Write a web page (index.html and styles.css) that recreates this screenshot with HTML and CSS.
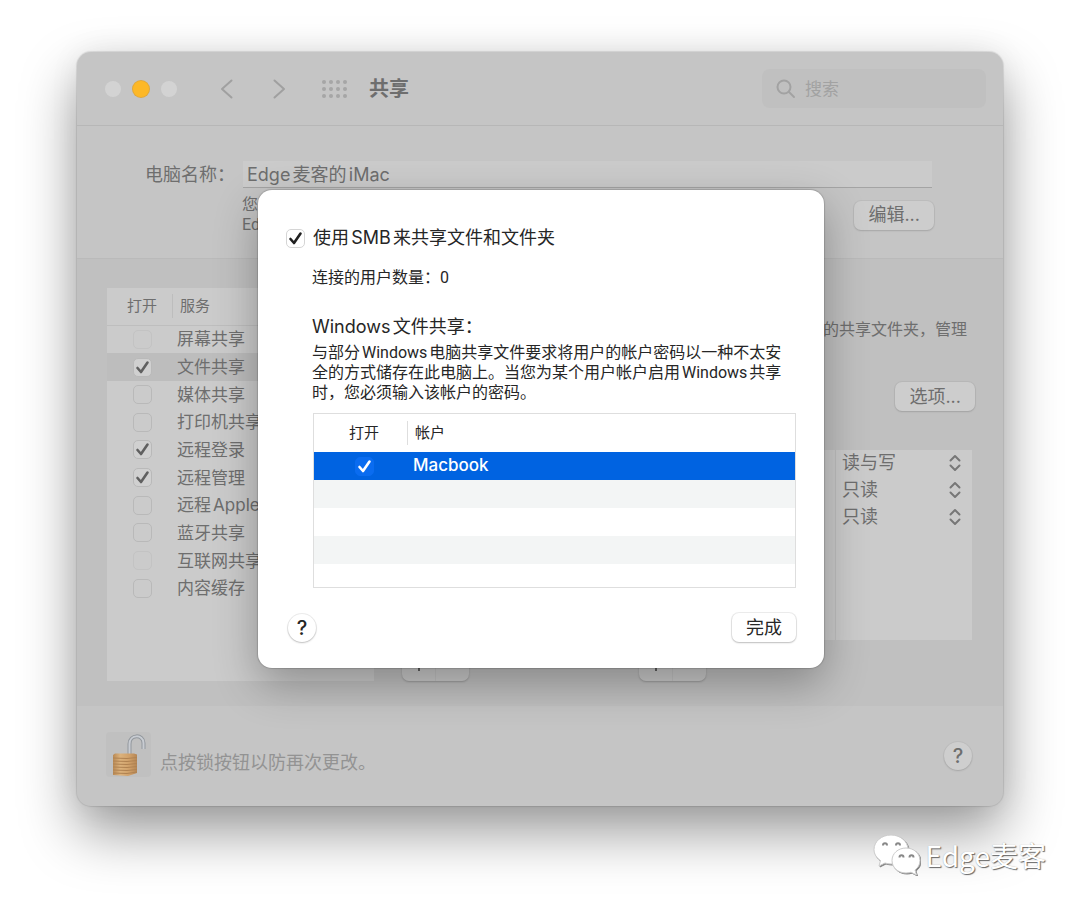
FILE: index.html
```html
<!DOCTYPE html>
<html lang="zh-CN">
<head>
    <meta charset="UTF-8">
    <meta name="viewport" content="width=device-width, initial-scale=1.0">
    <title>共享</title>
    <link rel="stylesheet" href="styles.css">
</head>
<body>
    <main class="window">
        <header class="toolbar">
            <div class="lights">
                <span class="light"></span>
                <span class="light minimize"></span>
                <span class="light"></span>
            </div>
            <button class="icon-button back" aria-label="返回">
                <svg width="13" height="20" viewBox="0 0 13 20"><path d="M11.500 1.500 2 10l9.500 8.500"/></svg>
            </button>
            <button class="icon-button forward" aria-label="前进">
                <svg width="13" height="20" viewBox="0 0 13 20"><path d="M1.500 1.500 11 10l-9.500 8.500"/></svg>
            </button>
            <button class="icon-button show-all" aria-label="显示全部">
                <svg width="26" height="20" viewBox="0 0 26 20">
                    <g class="dots">
                        <circle cx="2" cy="3" r="2"/><circle cx="9" cy="3" r="2"/><circle cx="16" cy="3" r="2"/><circle cx="23" cy="3" r="2"/>
                        <circle cx="2" cy="10" r="2"/><circle cx="9" cy="10" r="2"/><circle cx="16" cy="10" r="2"/><circle cx="23" cy="10" r="2"/>
                        <circle cx="2" cy="17" r="2"/><circle cx="9" cy="17" r="2"/><circle cx="16" cy="17" r="2"/><circle cx="23" cy="17" r="2"/>
                    </g>
                </svg>
            </button>
            <h1 class="title">共享</h1>
            <label class="search">
                <svg width="20" height="20" viewBox="0 0 20 20"><circle cx="8" cy="8" r="6.500"/><path d="m13 13 5 5"/></svg>
                <input type="search" placeholder="搜索" aria-label="搜索">
            </label>
        </header>

        <section class="computer">
            <div class="name-row">
                <label for="computer-name">电脑名称：</label>
                <input type="text" id="computer-name" value="Edge麦客的iMac">
            </div>
            <div class="address-row">
                <p class="small">您<br>Edge</p>
                <button class="button">编辑...</button>
            </div>
        </section>

        <section class="sharing">
            <div class="services">
                <table>
                    <thead>
                        <tr><th class="on">打开</th><th><span class="divider">服务</span></th></tr>
                    </thead>
                    <tbody>
                        <tr><td class="on"><input type="checkbox" id="s1" disabled></td><td><label for="s1">屏幕共享</label></td></tr>
                        <tr class="current"><td class="on"><input type="checkbox" id="s2" checked></td><td><label for="s2">文件共享</label></td></tr>
                        <tr><td class="on"><input type="checkbox" id="s3"></td><td><label for="s3">媒体共享</label></td></tr>
                        <tr><td class="on"><input type="checkbox" id="s4"></td><td><label for="s4">打印机共享</label></td></tr>
                        <tr><td class="on"><input type="checkbox" id="s5" checked></td><td><label for="s5">远程登录</label></td></tr>
                        <tr><td class="on"><input type="checkbox" id="s6" checked></td><td><label for="s6">远程管理</label></td></tr>
                        <tr><td class="on"><input type="checkbox" id="s7"></td><td><label for="s7">远程Apple</label></td></tr>
                        <tr><td class="on"><input type="checkbox" id="s8"></td><td><label for="s8">蓝牙共享</label></td></tr>
                        <tr><td class="on"><input type="checkbox" id="s9" disabled></td><td><label for="s9">互联网共享</label></td></tr>
                        <tr><td class="on"><input type="checkbox" id="s10"></td><td><label for="s10">内容缓存</label></td></tr>
                    </tbody>
                </table>
            </div>

            <div class="detail">
                <p class="small summary">上的共享文件夹，管理</p>
                <button class="button options">选项...</button>
                <div class="lists">
                    <div class="folders"></div>
                    <div class="users">
                        <div class="permissions">
                            <div class="permission">
                                <select aria-label="权限"><option>读与写</option></select>
                                <svg width="12" height="18" viewBox="0 0 12 18"><path d="M1.500 6.500 6 2l4.500 4.500M1.500 11.500 6 16l4.500-4.500"/></svg>
                            </div>
                            <div class="permission">
                                <select aria-label="权限"><option>只读</option></select>
                                <svg width="12" height="18" viewBox="0 0 12 18"><path d="M1.500 6.500 6 2l4.500 4.500M1.500 11.500 6 16l4.500-4.500"/></svg>
                            </div>
                            <div class="permission">
                                <select aria-label="权限"><option>只读</option></select>
                                <svg width="12" height="18" viewBox="0 0 12 18"><path d="M1.500 6.500 6 2l4.500 4.500M1.500 11.500 6 16l4.500-4.500"/></svg>
                            </div>
                        </div>
                    </div>
                    <div class="stepper">
                        <button aria-label="添加"><svg width="12" height="12" viewBox="0 0 12 12"><path d="M6 0v12M0 6h12"/></svg></button>
                        <button aria-label="移除"></button>
                    </div>
                    <div class="stepper">
                        <button aria-label="添加"><svg width="12" height="12" viewBox="0 0 12 12"><path d="M6 0v12M0 6h12"/></svg></button>
                        <button aria-label="移除"></button>
                    </div>
                </div>
            </div>
        </section>

        <footer class="footer">
            <button class="lock" aria-label="锁">
                <svg width="45" height="45" viewBox="0 0 45 45">
                    <defs>
                        <linearGradient id="brass" x1="0" x2="1">
                            <stop offset="0" stop-color="#b98a55"/>
                            <stop offset=".3" stop-color="#dcb27c"/>
                            <stop offset=".7" stop-color="#cf9f68"/>
                            <stop offset="1" stop-color="#b58655"/>
                        </linearGradient>
                    </defs>
                    <path class="shackle-edge" d="M23.500 23V12c0-10 14-10 14-1v6"/>
                    <path class="shackle" d="M23.500 23V12c0-10 14-10 14-1v6"/>
                    <path fill="url(#brass)" d="M7 23l2-1.500h19l3 1v18.500l-9 3L7 43z"/>
                    <path class="grooves" d="M7 26l14 .5L31 25.500M7 29l14 .5L31 28.500M7 32l14 .5L31 31.500M7 35l14 .5L31 34.500M7 38l14 .5L31 37.500M7 41l14 .5L31 40"/>
                </svg>
            </button>
            <p class="hint">点按锁按钮以防再次更改。</p>
            <button class="help">?</button>
        </footer>

        <div class="overlay">
            <div class="dialog" role="dialog" aria-label="文件共享">
                <label class="smb"><input type="checkbox" checked> 使用SMB来共享文件和文件夹</label>
                <div class="dialog-text">
                    <p class="small connected">连接的用户数量：0</p>
                    <h2>Windows文件共享：</h2>
                    <p class="small">与部分Windows电脑共享文件要求将用户的帐户密码以一种不太安全的方式储存在此电脑上。当您为某个用户帐户启用Windows共享时，您必须输入该帐户的密码。</p>
                </div>
                <div class="accounts">
                    <table>
                        <thead>
                            <tr><th class="on">打开</th><th><span class="divider">帐户</span></th></tr>
                        </thead>
                        <tbody>
                            <tr class="selected"><td class="on"><input type="checkbox" id="account" checked></td><td><label for="account">Macbook</label></td></tr>
                            <tr><td></td><td></td></tr>
                            <tr><td></td><td></td></tr>
                            <tr><td></td><td></td></tr>
                            <tr><td></td><td></td></tr>
                        </tbody>
                    </table>
                </div>
                <div class="actions">
                    <button class="help">?</button>
                    <button class="button">完成</button>
                </div>
            </div>
        </div>
    </main>

    <div class="watermark">
        <svg width="48" height="42" viewBox="0 0 48 42">
            <g class="bubble-shade">
                <path d="M18 1C8.500 1 1 7.500 1 15.500c0 4.500 2.500 8.500 6.500 11L6 32l6-3c2 .6 4 1 6 1 9.500 0 17-6.500 17-14.500S27.500 1 18 1z"/>
            </g>
            <path d="M18 1C8.500 1 1 7.500 1 15.500c0 4.500 2.500 8.500 6.500 11L6 32l6-3c2 .6 4 1 6 1 9.500 0 17-6.500 17-14.500S27.500 1 18 1z"/>
            <path class="eye" d="M10 11.500c0-3 4-3 4 0M23 11.500c0-3 4-3 4 0"/>
            <g class="bubble-shade">
                <path d="M33 14c-8 0-14 5.500-14 12.500S25 39 33 39c1.800 0 3.500-.3 5-.8l5.500 2.800-1.500-5c3.300-2.300 5-5.700 5-9.500C47 19.500 41 14 33 14z"/>
            </g>
            <path d="M33 14c-8 0-14 5.500-14 12.500S25 39 33 39c1.800 0 3.500-.3 5-.8l5.500 2.800-1.500-5c3.300-2.300 5-5.700 5-9.500C47 19.500 41 14 33 14z"/>
            <path class="eye" d="M26.500 23.500c0-3 4-3 4 0M36.500 23.500c0-3 4-3 4 0"/>
        </svg>
        <span>Edge麦客</span>
    </div>
</body>
</html>
```
FILE: styles.css
```css
* {
    box-sizing: border-box;
}
body {
    margin: 0;
    min-height: 100vh;
    display: flex;
    position: relative;
    overflow: hidden;
    background: #fff;
    color: #6e6e6e;
    font: 18px/24px Inter, "Noto Sans CJK SC", sans-serif;
    text-autospace: normal;
}
h1, h2, p {
    margin: 0;
    font-weight: normal;
}
button, input, select {
    margin: 0;
    padding: 0;
    border: none;
    background: none;
    color: inherit;
    font: inherit;
    appearance: none;
}
svg {
    display: block;
    flex: none;
    fill: none;
}
table {
    width: 100%;
    border-collapse: collapse;
    table-layout: fixed;
}
th, td {
    padding: 0;
    text-align: left;
    font-weight: normal;
}
.small {
    font-family: Roboto, "Noto Sans CJK SC", sans-serif;
    font-size: 16px;
    line-height: 20px;
}
.window {
    flex: 1;
    margin: 52px 77px 102px;
    position: relative;
    display: flex;
    flex-direction: column;
    border-radius: 14px;
    background: #c5c5c5;
    box-shadow: 0 0 1px 1px rgba(0,0,0,0.1), 0 26px 56px rgba(0,0,0,0.4), 0 0 32px rgba(0,0,0,0.06);
}

/* toolbar */
.toolbar {
    height: 74px;
    padding: 0 17px 0 28px;
    display: flex;
    align-items: center;
    border-bottom: 1px solid #b7b7b7;
}
.lights {
    display: flex;
    gap: 12px;
    margin-right: 43px;
}
.light {
    width: 16px;
    height: 16px;
    border-radius: 50%;
    background: #d3d3d3;
}
.light.minimize {
    background: #fdb827;
    box-shadow: 0 0 0 1px #e0a83a;
}
.icon-button {
    stroke: #a0a0a0;
    stroke-width: 2;
    stroke-linecap: round;
    stroke-linejoin: round;
}
.back {
    margin-right: 40px;
}
.forward {
    margin-right: 36px;
}
.show-all {
    margin-right: 21px;
}
.dots {
    fill: #a6a6a6;
    stroke: none;
}
.title {
    font-size: 20px;
    font-weight: bold;
}
.search {
    width: 224px;
    height: 39px;
    margin-left: auto;
    padding: 0 14px;
    display: flex;
    align-items: center;
    gap: 9px;
    border-radius: 8px;
    background: #c0c0c0;
    stroke: #a2a2a2;
    stroke-width: 2;
    stroke-linecap: round;
}
.search input {
    flex: 1;
    min-width: 0;
    font-size: 17px;
}
.search input::placeholder {
    color: #a2a2a2;
}

/* computer name */
.computer {
    height: 133px;
    padding: 35px 69px 0 68px;
    border-bottom: 1px solid #bababa;
}
.name-row {
    display: flex;
    align-items: center;
    gap: 8px;
    margin-right: 2px;
}
.name-row input {
    flex: 1;
    height: 27px;
    padding: 0 4px 2px;
    background: #cbcbcb;
    border-bottom: 1px solid #a4a4a4;
}
.address-row {
    display: flex;
    justify-content: space-between;
    align-items: center;
    margin: 7px 0 0 97px;
}
.button {
    height: 29px;
    padding: 0 14px;
    border-radius: 7px;
    background: #cdcdcd;
    box-shadow: 0 0 0 1px rgba(0,0,0,0.04), 0 1px 2px rgba(0,0,0,0.12);
    line-height: 28px;
    text-autospace: no-autospace;
}

/* checkboxes */
input[type="checkbox"] {
    display: block;
    width: 19px;
    height: 19px;
    border: 1px solid #b9b9b9;
    border-radius: 5px;
}
input[type="checkbox"]:disabled {
    border-color: #c3c3c3;
}
input[type="checkbox"]:checked {
    background: #d0d0d0 url('data:image/svg+xml,<svg xmlns="http://www.w3.org/2000/svg" viewBox="0 0 17 17"><path d="M3.500 9 7 13l6.500-9.500" fill="none" stroke="%23606060" stroke-width="2.600" stroke-linecap="round" stroke-linejoin="round"/></svg>');
}

/* service list and detail pane */
.sharing {
    flex: 1;
    padding: 29px 31px 25px 30px;
    display: grid;
    grid-template-columns: 267px 1fr;
    gap: 28px;
    background: #c0c0c0;
}
.services {
    background: #cbcbcb;
    font-size: 17px;
}
.services table {
    height: 314px;
}
.services th {
    height: 37px;
    border-bottom: 1px solid #bebebe;
}
th {
    font-size: 15px;
}
.services .on {
    width: 65px;
}
.services .on input {
    margin-left: 26px;
}
.services th.on {
    padding-left: 20px;
}
.services td:last-child {
    padding-left: 5px;
}
.services .current {
    background: #bdbdbd;
}
.divider {
    display: block;
    padding-left: 7px;
    border-left: 1px solid #bdbdbd;
}
.detail {
    display: flex;
    flex-direction: column;
    align-items: flex-end;
}
.summary {
    margin: 32px 5px 42px 0;
}
.options {
    margin-right: -3px;
}
.lists {
    align-self: stretch;
    flex: 1;
    margin-top: 39px;
    display: grid;
    grid-template-columns: 228px 1fr;
    grid-template-rows: 1fr 27px;
    gap: 14px 9px;
}
.folders, .users {
    background: #cbcbcb;
}
.permissions {
    width: 137px;
    height: 100%;
    margin-left: auto;
    border-left: 1px solid #bfbfbf;
}
.permission {
    position: relative;
    height: 27px;
}
.permission select {
    width: 100%;
    height: 26px;
    padding-left: 6px;
}
.permission svg {
    position: absolute;
    top: 4px;
    right: 11px;
    stroke: #777;
    stroke-width: 2;
    stroke-linecap: round;
    stroke-linejoin: round;
    pointer-events: none;
}
.stepper {
    width: 67px;
    display: flex;
    border-radius: 7px;
    background: #cbcbcb;
    box-shadow: 0 1px 2px rgba(0,0,0,0.2);
}
.stepper button {
    flex: 1;
    display: flex;
    justify-content: center;
    padding-top: 5px;
    stroke: #606060;
    stroke-width: 2;
}
.stepper button + button {
    border-left: 1px solid #c2c2c2;
}

/* footer */
.footer {
    height: 100px;
    padding: 0 31px 0 29px;
    display: flex;
    align-items: center;
}
.lock {
    margin-bottom: 3px;
    background: #c0c0c0;
    border-radius: 4px;
}
.shackle-edge {
    stroke: #92979d;
    stroke-width: 4;
}
.shackle {
    stroke: #c8ccd2;
    stroke-width: 2;
}
.grooves {
    stroke: #b08251;
    stroke-width: 1;
}
.hint {
    flex: 1;
    margin-left: 9px;
    padding-top: 14px;
    color: #939393;
}
.help {
    width: 28px;
    height: 28px;
    border-radius: 50%;
    background: #cecece;
    box-shadow: 0 0 0 1px rgba(0,0,0,0.04), 0 1px 2px rgba(0,0,0,0.12);
    font-size: 20px;
    font-weight: 500;
    line-height: 28px;
}

/* dialog */
.overlay {
    position: absolute;
    inset: 138px 0 auto;
    display: flex;
    justify-content: center;
    padding-left: 2px;
}
.dialog {
    width: 566px;
    padding: 36px 28px 26px;
    border-radius: 14px;
    background: #fff;
    box-shadow: 0 0 1px 1px rgba(0,0,0,0.15), 0 16px 44px rgba(0,0,0,0.3);
    color: #262626;
}
.dialog .button, .dialog .help {
    background: #fff;
    box-shadow: 0 0 0 1px rgba(0,0,0,0.07), 0 1px 2px rgba(0,0,0,0.2);
}
.dialog input[type="checkbox"] {
    border-color: #d5d5d5;
    background: #fff url('data:image/svg+xml,<svg xmlns="http://www.w3.org/2000/svg" viewBox="0 0 17 17"><path d="M3.500 9 7 13l6.500-9.500" fill="none" stroke="%23202020" stroke-width="2.600" stroke-linecap="round" stroke-linejoin="round"/></svg>');
}
.smb {
    display: flex;
    align-items: center;
    gap: 8px;
}
.dialog-text {
    padding: 18px 0 10px 26px;
}
.dialog h2 {
    margin: 27px 0 4px;
    font-size: 18px;
}
.accounts {
    height: 175px;
    margin-left: 27px;
    overflow: hidden;
    border: 1px solid #dedede;
}
.accounts th {
    height: 38px;
}
.accounts .on {
    width: 93px;
}
.accounts th.on {
    padding-left: 35px;
}
.accounts .divider {
    border-color: #dedede;
}
.accounts td {
    height: 28px;
}
.accounts td label {
    display: block;
    padding: 0 0 2px 6px;
    font-size: 17px;
    font-weight: 500;
}
.accounts tr:nth-child(even) {
    background: #f3f5f5;
}
.accounts .selected {
    background: #0063e1;
    color: #fff;
}
.accounts .selected input[type="checkbox"] {
    margin-left: 41px;
    border-color: #0a6cf0;
    background: #0a6cf0 url('data:image/svg+xml,<svg xmlns="http://www.w3.org/2000/svg" viewBox="0 0 17 17"><path d="M3.500 9 7 13l6.500-9.500" fill="none" stroke="%23ffffff" stroke-width="2.600" stroke-linecap="round" stroke-linejoin="round"/></svg>');
}
.actions {
    display: flex;
    justify-content: space-between;
    align-items: center;
    margin: 25px 0 0 2px;
}

/* watermark */
.watermark {
    position: absolute;
    right: 34px;
    bottom: 32px;
    display: flex;
    align-items: center;
    gap: 5px;
    color: #fff;
    font: 28px/42px "Noto Sans CJK SC", sans-serif;
    text-autospace: no-autospace;
    text-shadow: 1px 1px 1px #666, 0 0 1px #aaa;
}
.watermark svg {
    fill: #fff;
    stroke: #ccc;
    stroke-width: 1;
}
.bubble-shade {
    fill: #777;
    stroke: #888;
    transform: translate(1px, 1px);
}
.eye {
    stroke: #888;
    stroke-width: 2;
}
```
